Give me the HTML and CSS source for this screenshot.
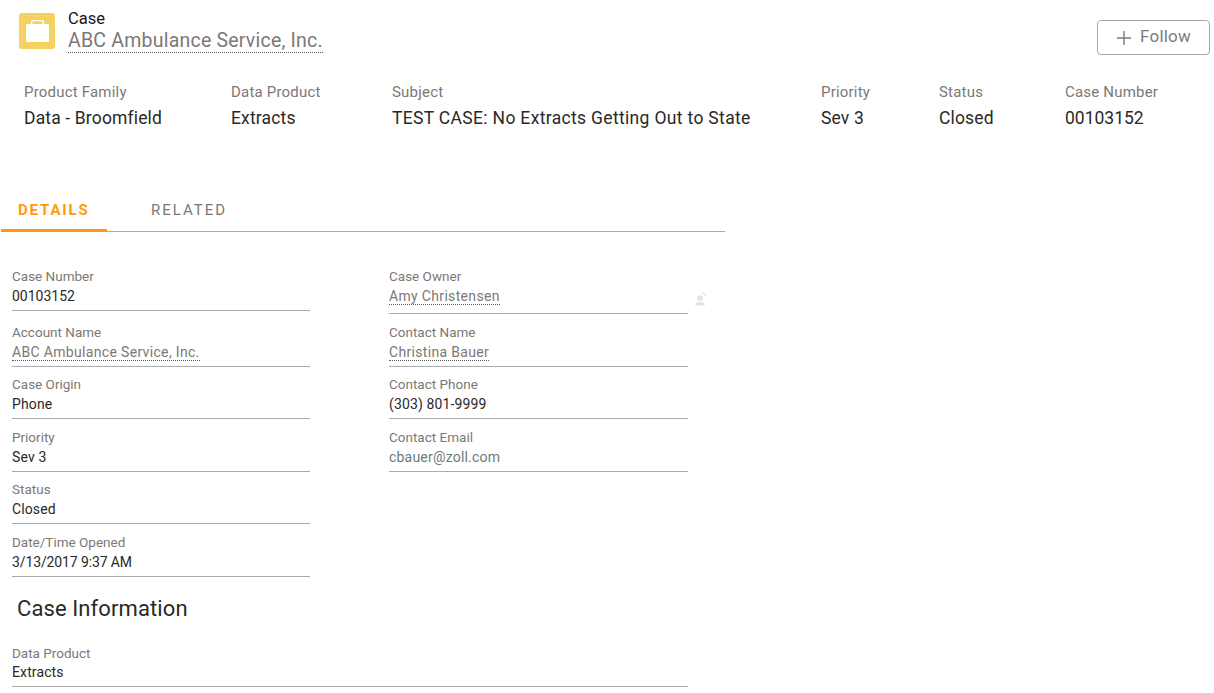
FILE: index.html
```html
<!DOCTYPE html>
<html lang="en">
<head>
<meta charset="utf-8">
<title>Case</title>
<link rel="stylesheet" href="styles.css">
</head>
<body>
<header class="head">
  <div class="title-row">
    <span class="case-icon">
      <svg width="36" height="36" viewBox="0 0 36 36"><rect x="7" y="11" width="23" height="18" rx="1.500" fill="#fff"/><path fill="none" stroke="#fff" stroke-width="1.400" d="M12.700 11V8.800c0-.8.500-1.200 1.200-1.200h9.200c.7 0 1.200.4 1.200 1.200V11"/></svg>
    </span>
    <div class="title-text">
      <div class="kind">Case</div>
      <a class="account">ABC Ambulance Service, Inc.</a>
    </div>
    <button class="follow" type="button">
      <svg class="plus" width="16" height="16" viewBox="0 0 16 16"><path fill="none" stroke="#7b7b7b" stroke-width="1.400" d="M8 1v14M1 8h14"/></svg>
      <span class="follow-text">Follow</span>
    </button>
  </div>
  <dl class="highlights">
    <div class="hl hl-family"><dt>Product Family</dt><dd>Data - Broomfield</dd></div>
    <div class="hl hl-product"><dt>Data Product</dt><dd>Extracts</dd></div>
    <div class="hl hl-subject"><dt>Subject</dt><dd class="wide-spaced">TEST CASE: No Extracts Getting Out to State</dd></div>
    <div class="hl hl-priority"><dt>Priority</dt><dd>Sev 3</dd></div>
    <div class="hl hl-status"><dt>Status</dt><dd>Closed</dd></div>
    <div class="hl hl-number"><dt>Case Number</dt><dd class="digits">00103152</dd></div>
  </dl>
</header>
<main class="content">
  <nav class="tabs">
    <a class="tab tab-active">DETAILS</a>
    <a class="tab">RELATED</a>
  </nav>
  <section class="form">
    <div class="row row-first">
      <div class="field"><div class="lbl">Case Number</div><div class="val val-digits">00103152</div></div>
      <div class="field field-owner"><div class="lbl">Case Owner</div><div class="val"><a class="link">Amy Christensen</a></div>
        <svg class="change-owner" width="14" height="14" viewBox="0 0 14 14"><circle cx="6" cy="6" r="2.800" fill="#e3e3e3"/><path fill="#e3e3e3" d="M1 13.500c0-2.500 2-3.500 5-3.500s5 1 5 3.500z"/><path fill="none" stroke="#e3e3e3" stroke-width="1.200" d="M8 1.200c2 0 3.800 1.300 4 3.600"/></svg>
      </div>
    </div>
    <div class="row">
      <div class="field"><div class="lbl">Account Name</div><div class="val"><a class="link">ABC Ambulance Service, Inc.</a></div></div>
      <div class="field"><div class="lbl">Contact Name</div><div class="val"><a class="link">Christina Bauer</a></div></div>
    </div>
    <div class="row">
      <div class="field"><div class="lbl">Case Origin</div><div class="val">Phone</div></div>
      <div class="field"><div class="lbl">Contact Phone</div><div class="val">(303) 801-9999</div></div>
    </div>
    <div class="row">
      <div class="field"><div class="lbl">Priority</div><div class="val">Sev 3</div></div>
      <div class="field"><div class="lbl">Contact Email</div><div class="val val-mail">cbauer@zoll.com</div></div>
    </div>
    <div class="row">
      <div class="field"><div class="lbl">Status</div><div class="val">Closed</div></div>
    </div>
    <div class="row">
      <div class="field"><div class="lbl">Date/Time Opened</div><div class="val val-date">3/13/2017 9:37 AM</div></div>
    </div>
    <h2 class="section-title">Case Information</h2>
    <div class="field field-wide"><div class="lbl">Data Product</div><div class="val val-last">Extracts</div></div>
  </section>
</main>
</body>
</html>
```
FILE: styles.css
```css
html, body {
  margin: 0;
  padding: 0;
  background: #fff;
  height: 693px;
  overflow: hidden;
}
body {
  font-family: Roboto, "Liberation Sans", sans-serif;
  color: #2b2826;
}
.head {
  padding: 0 4px 0 19px;
}
.title-row {
  display: flex;
  align-items: flex-start;
  padding-top: 8px;
  height: 64px;
  box-sizing: border-box;
}
.case-icon {
  width: 36px;
  height: 36px;
  margin-top: 5px;
  background: #f4d25f;
  border-radius: 3px;
  display: flex;
  flex: none;
}
.title-text {
  margin-left: 13px;
  flex: 1;
}
.kind {
  font-size: 16.500px;
  line-height: 20px;
  padding-top: 1px;
  margin-bottom: -1px;
  color: #16141a;
}
.account {
  display: inline-block;
  font-size: 19.500px;
  line-height: 23px;
  letter-spacing: 0.220px;
  color: #7d7875;
  border-bottom: 1px dotted #5c5c5c;
  margin-top: 1px;
}
.follow {
  width: 113px;
  height: 35px;
  margin-top: 12px;
  background: #fff;
  border: 1px solid #a8a8a8;
  border-radius: 4px;
  display: flex;
  align-items: center;
  justify-content: center;
  gap: 8px;
  padding: 0;
  font: 17px Roboto, sans-serif;
  letter-spacing: 0.200px;
  color: #7b7b7b;
}
.follow-text {
  margin-top: -4px;
}
.highlights {
  display: flex;
  margin: 0;
  padding: 18px 0 0 5px;
}
.hl dt {
  font-size: 15px;
  line-height: 20px;
  letter-spacing: 0.200px;
  color: #7d7875;
}
.hl dd {
  margin: 6px 0 0;
  font-size: 17.500px;
  line-height: 20px;
  letter-spacing: 0.150px;
  color: #2b2826;
}
.hl dd.wide-spaced {
  letter-spacing: 0.330px;
}
.hl dd.digits {
  letter-spacing: 0;
}
.hl-family { width: 207px; }
.hl-product { width: 161px; }
.hl-subject { width: 429px; }
.hl-priority { width: 118px; }
.hl-status { width: 126px; }
.content {
  width: 724px;
  margin-left: 1px;
  padding-top: 63px;
}
.tabs {
  display: flex;
  border-bottom: 1px solid #aaa;
  height: 41px;
  box-sizing: border-box;
}
.tab {
  font-size: 15px;
  line-height: 18px;
  letter-spacing: 2px;
  color: #7d7875;
  padding-top: 10px;
  margin-left: 44px;
}
.tab-active {
  width: 106px;
  margin: 0 0 -1px;
  box-sizing: border-box;
  padding-left: 17px;
  color: #ff9a0d;
  font-weight: 700;
  letter-spacing: 1.850px;
  border-bottom: 3px solid #ff9a0d;
}
.form {
  padding: 36px 0 0 11px;
}
.row {
  display: flex;
  gap: 79px;
  height: 52.500px;
}
.row-first {
  height: 55.500px;
}
.field {
  width: 298px;
  border-bottom: 1px solid #aaa;
  position: relative;
  height: 43px;
  box-sizing: border-box;
  align-self: flex-start;
}
.row-first .field-owner {
  height: 46px;
}
.row .field + .field {
  width: 299px;
}
.lbl {
  font-size: 13.500px;
  line-height: 16px;
  color: #7d7875;
}
.val {
  font-size: 14px;
  line-height: 18px;
  letter-spacing: 0.120px;
  margin-top: 3px;
  color: #2b2826;
}
.val-digits {
  letter-spacing: 0;
}
.val-date {
  letter-spacing: -0.120px;
}
.val-last {
  margin-top: 2px;
}
.link {
  color: #7d7875;
  letter-spacing: 0.330px;
  border-bottom: 1px dotted #5c5c5c;
}
.val-mail {
  color: #6b7a80;
  letter-spacing: 0.200px;
}
.change-owner {
  position: absolute;
  left: 305px;
  top: 24px;
}
.section-title {
  margin: 0;
  padding: 9px 0 0 5px;
  height: 59px;
  box-sizing: border-box;
  font-size: 22px;
  line-height: 28px;
  font-weight: 400;
  letter-spacing: 0.100px;
  color: #2b2826;
}
.field-wide {
  width: 676px;
  height: 42px;
}
```
